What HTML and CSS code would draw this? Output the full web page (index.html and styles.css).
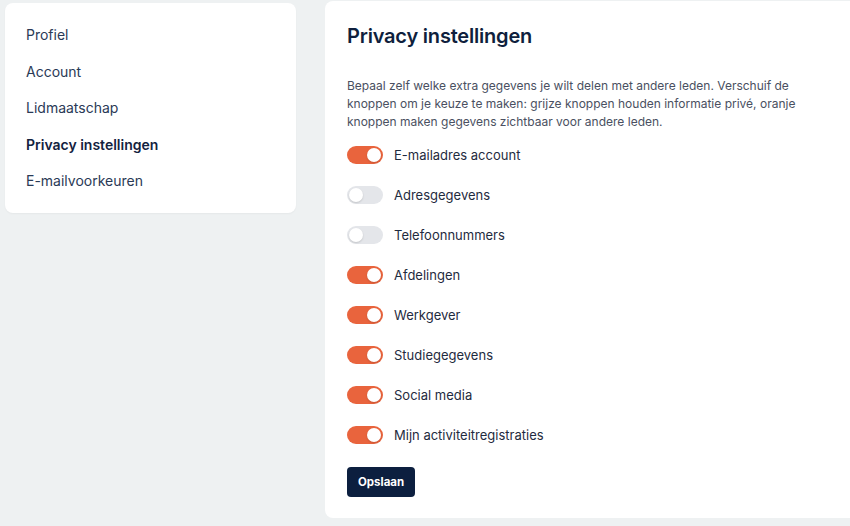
FILE: index.html
```html
<!DOCTYPE html>
<html lang="nl">
<head>
  <meta charset="UTF-8">
  <title>Privacy instellingen</title>
  <link rel="stylesheet" href="styles.css">
</head>

<body>
  <div class="page">
    <nav class="side">
      <ul>
        <li><a href="#">Profiel</a></li>
        <li><a href="#">Account</a></li>
        <li><a href="#">Lidmaatschap</a></li>
        <li><a href="#" class="active">Privacy instellingen</a></li>
        <li><a href="#">E-mailvoorkeuren</a></li>
      </ul>
    </nav>

    <main class="card">
      <h1>Privacy instellingen</h1>
      <p class="intro">Bepaal zelf welke extra gegevens je wilt delen met andere leden. Verschuif de knoppen om je keuze te maken: grijze knoppen houden informatie privé, oranje knoppen maken gegevens zichtbaar voor andere leden.</p>

      <form class="privacy">
        <ul>
          <li><label class="switch"><input type="checkbox" checked><span class="track"></span>E-mailadres account</label></li>
          <li><label class="switch"><input type="checkbox"><span class="track"></span>Adresgegevens</label></li>
          <li><label class="switch"><input type="checkbox"><span class="track"></span>Telefoonnummers</label></li>
          <li><label class="switch"><input type="checkbox" checked><span class="track"></span>Afdelingen</label></li>
          <li><label class="switch"><input type="checkbox" checked><span class="track"></span>Werkgever</label></li>
          <li><label class="switch"><input type="checkbox" checked><span class="track"></span>Studiegegevens</label></li>
          <li><label class="switch"><input type="checkbox" checked><span class="track"></span>Social media</label></li>
          <li><label class="switch"><input type="checkbox" checked><span class="track"></span>Mijn activiteitregistraties</label></li>
        </ul>
        <button type="submit">Opslaan</button>
      </form>
    </main>
  </div>
</body>
</html>
```

FILE: styles.css
```css
* {
  box-sizing: border-box;
}
body {
  margin: 0;
  background: #eef1f2;
  font-family: Inter, "Noto Sans", sans-serif;
  overflow: hidden;
}
ul {
  list-style: none;
  margin: 0;
  padding: 0;
}
.page {
  display: flex;
  align-items: flex-start;
  gap: 29px;
  padding-left: 5px;
}

/* linker menu */
.side {
  width: 291px;
  flex-shrink: 0;
  margin-top: 3px;
  background: #fff;
  border-radius: 8px;
  padding: 22px 21px;
  box-shadow: 0 1px 2px rgba(0, 0, 0, 0.04);
}
.side ul {
  display: flex;
  flex-direction: column;
  gap: 16.5px;
}
.side a {
  display: block;
  line-height: 20px;
  font-size: 14px;
  color: #2a3a56;
  text-decoration: none;
}
.side a.active {
  font-weight: 600;
  color: #13223f;
}

/* privacy kaart */
.card {
  width: 560px;
  flex-shrink: 0;
  margin-top: 1px;
  background: #fff;
  border-radius: 8px;
  padding: 21px 22px 21px;
}
.card h1 {
  margin: 0;
  font-size: 20px;
  line-height: 28px;
  font-weight: 600;
  color: #0f1f3d;
  letter-spacing: -0.2px;
}
.intro {
  width: 462px;
  margin: 27px 0 0;
  font-size: 12px;
  line-height: 18px;
  color: #4a5061;
}
.privacy ul {
  margin-top: 4px;
}
.privacy li {
  height: 40px;
  display: flex;
  align-items: center;
}
.switch {
  display: flex;
  align-items: center;
  gap: 11px;
  font-size: 13px;
  color: #1f2b40;
  cursor: pointer;
}
.switch input {
  display: none;
}
.track {
  position: relative;
  width: 36px;
  height: 18px;
  border-radius: 9px;
  background: #e4e6ea;
}
.track::after {
  content: "";
  position: absolute;
  top: 2px;
  left: 2px;
  width: 14px;
  height: 14px;
  border-radius: 50%;
  background: #fff;
  box-shadow: 0 1px 2px rgba(0, 0, 0, 0.15);
}
.switch input:checked + .track {
  background: #e9643d;
}
.switch input:checked + .track::after {
  left: 20px;
}
.privacy button {
  display: block;
  margin-top: 12px;
  height: 30px;
  padding: 0 11px;
  border: 0;
  border-radius: 4px;
  background: #0c1f3f;
  color: #fff;
  font-family: inherit;
  font-size: 11.5px;
  font-weight: 700;
}
```
